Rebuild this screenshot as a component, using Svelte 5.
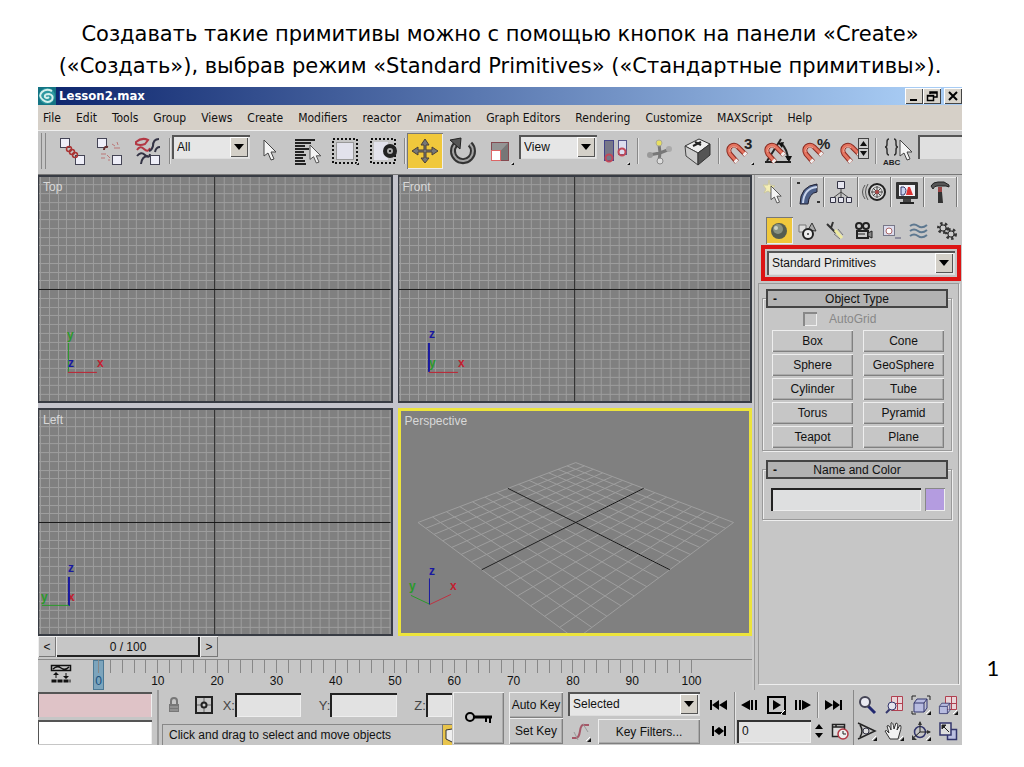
<script lang="ts">
	const menus = ['File', 'Edit', 'Tools', 'Group', 'Views', 'Create', 'Modifiers', 'reactor', 'Animation', 'Graph Editors', 'Rendering', 'Customize', 'MAXScript', 'Help'];
	const primitives = ['Box', 'Cone', 'Sphere', 'GeoSphere', 'Cylinder', 'Tube', 'Torus', 'Pyramid', 'Teapot', 'Plane'];

	const corner = '<path d="M29 26v3h-3z" fill="#111"/><path d="M26 28.5L28.500 26" stroke="#fff" fill="none"/>';
	const cursor = '<path d="M0 0v16l4-3 3 7 3-1-3-7h5z" fill="#f4f4f4" stroke="#444"/>';
	const magnet = '<path d="M12 26L5 18C1 12 8 6 13 11l8 8" fill="none" stroke="#8a2a20" stroke-width="5"/><path d="M12 26L5 18C1 12 8 6 13 11l8 8" fill="none" stroke="#e47460" stroke-width="3"/><path d="M5 16C4 12 8 9 12 12" fill="none" stroke="#f4b4a4"/><path d="M10 24l2 2M19 17l2 2" stroke="#eee" stroke-width="4"/>';
	const box = (x: number, y: number) => `<rect x="${x}.5" y="${y}.5" width="9" height="9" fill="#eeeef8" stroke="#445"/>`;
	const dots = '<rect x="3" y="3" width="24" height="24" fill="none" stroke="#111" stroke-width="2" stroke-dasharray="2 2"/>';

	// toolbar glyphs, drawn in a 30x30 box
	const tools: Record<string, string> = {
		link: box(3, 2) + box(18, 19) + '<g fill="none" stroke="#a33" stroke-width="1.500"><circle cx="12" cy="13" r="2.500"/><circle cx="15" cy="16" r="2.500"/><circle cx="18" cy="19" r="2.500"/></g>',
		unlink: box(2, 2) + box(17, 19) + '<path d="M13 11q-4-1-4 3" fill="none" stroke="#633" stroke-width="2"/><path d="M17 8l3 2m2-4l1 3m-4 3h6M6 18h5m-5 4h4m2-3l3 3m-2 2h2" stroke="#b77" fill="none"/>',
		bind: '<path d="M3 6q6-5 12-2l-3 4q-5 2-9 0zM4 14q3-5 7-1t6-1" fill="none" stroke="#b33844" stroke-width="2"/><path d="M26 3q-6 0-6 7-1 4-4 5M27 11q-4 0-5 5M4 20q4-5 8-1t5-1M15 20q-6 0-7 8" fill="none" stroke="#334" stroke-width="2"/>' + box(17, 19),
		select: `<g transform="translate(10 4)">${cursor}</g>`,
		list: '<path d="M3 4h20M3 7h16M3 10h10M3 13h14M3 16h9M3 19h11M3 22h8M3 25h10M3 28h11" stroke="#222" stroke-width="2"/><g transform="translate(18 9) scale(.9)">' + cursor + '</g>',
		region: dots + '<rect x="6.500" y="6.500" width="17" height="17" fill="#e2e2ec" stroke="#999"/>' + corner,
		window: dots + '<path d="M6 6h14v18H6z" fill="#e2e2ec"/><circle cx="22" cy="15" r="7" fill="#222"/><circle cx="22" cy="15" r="3" fill="#aaa"/><circle cx="22" cy="15" r="1" fill="#000"/>',
		move: '<path d="M15 3l4 6h-3v5h6v-3l6 4-6 4v-3h-6v6h3l-4 5-4-5h3v-6H8v3l-6-4 6-4v3h6V9h-3z" fill="#777" stroke="#4a4038"/>',
		rotate: '<path d="M9 8A10 10 0 1 0 23 8" fill="none" stroke="#333" stroke-width="6"/><path d="M8 9A10 10 0 1 0 23 8" fill="none" stroke="#a4a4a4" stroke-width="2"/><path d="M3 4l11-2-1 11z" fill="#555" stroke="#222"/>',
		scale: '<rect x="6.500" y="6.500" width="17" height="18" fill="#777" stroke="#844a50"/><path d="M7 24V7h16z" fill="#949494"/><rect x="6.500" y="14.500" width="9" height="10" fill="#fff" stroke="#d66"/>' + corner,
		pivot: '<rect x="3.500" y="4.500" width="9" height="20" fill="#778" stroke="#448"/><rect x="17.500" y="4.500" width="8" height="14" fill="#dde" stroke="#558"/><g fill="none" stroke="#c24858" stroke-width="2"><circle cx="8" cy="22" r="3.500"/><circle cx="21" cy="16" r="3.500"/></g>' + corner,
		manipulate: '<path d="M15 8l1 9M5 19l11-2 10-4M16 17l-1 8" stroke="#777" stroke-width="3" fill="none"/><circle cx="15" cy="7" r="3" fill="#e8df60" stroke="#aa9"/><circle cx="16" cy="25" r="3" fill="#ddd" stroke="#888"/><circle cx="6" cy="19" r="3" fill="#999"/><circle cx="25" cy="13" r="3" fill="#aaa"/>',
		keyboard: '<path d="M3 10l14-7 11 5-12 9z" fill="#eee" stroke="#333"/><path d="M3 10l13 7v12L4 20z" fill="#ccc" stroke="#444"/><path d="M28 8v11l-12 10V17z" fill="#555" stroke="#333"/><path d="M11 10l8-4M13 6l6 3" stroke="#222" stroke-width="2"/>',
		snap: magnet + '<text x="19" y="13" font-size="15">3</text>' + corner,
		angle: '<path d="M2 26h26M4 25L18 3M18 7q7 7 7 17" fill="none" stroke="#222" stroke-width="2"/><path d="M15 7l6-1-2 6zM22 20h7l-3 6z" fill="#111"/>' + magnet,
		percent: magnet + '<text x="16" y="13" font-size="15">%</text>',
		spinner: magnet + '<rect x="19.500" y="2.500" width="10" height="20" fill="#ccc" stroke="#444"/><path d="M20 12.500h9" stroke="#333"/><path d="M21 10l3.500-5 3.500 5zM21 15l3.500 5 3.500-5z" fill="#111"/>',
		named: '<path d="M7 3Q5 3 5 6v2q0 3-2 3 2 0 2 3v2q0 3 2 3M12 3q2 0 2 3v2q0 3 2 3-2 0-2 3v2q0 3-2 3" fill="none" stroke="#333" stroke-width="1.500"/><text x="1" y="29" font-size="8">ABC</text><g transform="translate(18 4)">' + cursor + '</g>'
	};

	// command panel tabs, 26x26
	const tabs: Record<string, string> = {
		Create: '<path d="M7 1l1 5 5 1-4 3 1 5-4-3-4 2 2-4-3-4 5 0z" fill="#f4eeb4" stroke="#ccc8a0"/><g transform="translate(9 7) scale(.85)">' + cursor + '</g>',
		Modify: '<path d="M5 25Q5 7 22 5v8q-8 1-9 12z" fill="#4c5f88" stroke="#223"/><path d="M8 24Q9 9 22 8" fill="none" stroke="#c8d4ec" stroke-width="2"/><path d="M2 4h3M22 23h3" stroke="#333" stroke-width="2"/>',
		Hierarchy: '<path d="M13 9v6M5 19l8-6 8 6M13 15v4" stroke="#444" fill="none"/><path d="M9.500 2.500h7v7h-7zM2.500 18.500h5v5h-5zM10.500 18.500h5v5h-5zM18.500 18.500h5v5h-5z" fill="#e6e6f0" stroke="#334"/>',
		Motion: '<path d="M4 6q-5 7 0 14M7 5q-5 8 0 16" stroke="#555" fill="none"/><circle cx="16" cy="13" r="8" fill="#ddd" stroke="#222" stroke-width="2"/><circle cx="16" cy="13" r="5" fill="none" stroke="#777"/><path d="M16 7v12M10 13h12M12 9l8 8M20 9l-8 8" stroke="#444"/><circle cx="16" cy="13" r="2" fill="#a44"/>',
		Display: '<rect x="2" y="3" width="22" height="17" rx="1" fill="#333"/><rect x="5" y="6" width="16" height="11" fill="#f2f2f8"/><path d="M7 8h3q4 3 0 8H7z" fill="#c8d4f0" stroke="#336"/><path d="M12 16l2-8h2l3 8z" fill="#d33"/><path d="M9 20h8v3H9z" fill="#444"/><path d="M6 24h14" stroke="#222" stroke-width="2"/>',
		Utilities: '<path d="M4 7q2-4 7-4h6l5 3v2l-3-1h-9q-3 0-4 3z" fill="#555" stroke="#222"/><path d="M11 8h4v6h-4z" fill="#944"/><path d="M11 13h4l1 11h-5z" fill="#333"/>'
	};

	// create categories, 20x20
	const kinds: Record<string, string> = {
		Geometry: '<circle cx="10" cy="10" r="8" fill="#555d50"/><circle cx="9" cy="8" r="5" fill="#899282"/><circle cx="7" cy="7" r="2" fill="#ccd2c4"/>',
		Shapes: '<path d="M11 9l4-7 4 8z" fill="#aaa" stroke="#333"/><path d="M2 4h7v7H2z" fill="#ddd" stroke="#777"/><circle cx="11" cy="13" r="5" fill="#eee" stroke="#222" stroke-width="2"/><circle cx="11" cy="13" r="1" fill="#333"/>',
		Lights: '<path d="M2 3l5 5M8 1l-2 6M7 8l4 4" stroke="#333" stroke-width="2"/><path d="M10 9l7 8" stroke="#eeeaa0" stroke-width="3"/><path d="M9 13l6 5M13 8l5 6" stroke="#777"/>',
		Cameras: '<g fill="#ccc" stroke="#222" stroke-width="2"><circle cx="6" cy="5" r="3"/><circle cx="13" cy="5" r="3"/><path d="M4 10h11v7H4z"/></g><path d="M15 12l4-2v7l-4-2zM5 13h7" stroke="#222" fill="#888"/>',
		Helpers: '<rect x="2.500" y="4.500" width="11" height="10" fill="#dcdcec" stroke="#778"/><circle cx="8" cy="10" r="3" fill="#fff" stroke="#a66"/><path d="M14 17h6" stroke="#557"/>',
		'Space Warps': '<path d="M1 5q4-3 8 0t9-1M1 10q4-3 8 0t9-1M1 15q4-3 8 0t9-1" fill="none" stroke="#5d7890" stroke-width="2"/>',
		Systems: '<g fill="#999" stroke="#333" stroke-width="4" stroke-dasharray="2 2"><circle cx="6" cy="7" r="4"/><circle cx="14" cy="13" r="4"/></g><g fill="#ccc" stroke="#333"><circle cx="6" cy="7" r="3"/><circle cx="14" cy="13" r="3"/></g>'
	};

	// playback and view navigation, 20x20
	const play: Record<string, string> = {
		start: '<path d="M1 5h2v10H1zM3 10l7-5v10zM10 10l8-5v10z"/>',
		prev: '<path d="M1 10l9-5v10zM11 5h2v10h-2zM15 5h2v10h-2z"/>',
		next: '<path d="M19 10l-9-5v10zM7 5h2v10H7zM3 5h2v10H3z"/>',
		end: '<path d="M19 5h-2v10h2zM17 10l-7-5v10zM10 10L2 5v10z"/>',
		key: '<path d="M3 5h2v10H3zM5 10l5-4v8zM15 5h2v10h-2zM15 10l-5-4v8z"/>',
		play: '<path d="M2 2h17v16H2z" fill="none" stroke="#000" stroke-width="2"/><path d="M7 5v10l8-5z"/>'
	};
	const tip = '<path d="M20 16v4h-4z" fill="#111"/><path d="M15 19l4-4" stroke="#fff"/>';
	const cube = '<path d="M3 8h10v9H3zM3 8l3-4h10l-3 4M16 4v9l-3 4" fill="#b8bce0" stroke="#33366c"/>';
	const nav = [
		['Zoom', '<path d="M11 11l7 7" stroke="#222870" stroke-width="3"/><circle cx="8" cy="7" r="5" fill="#eaeaf2" stroke="#445" stroke-width="2"/>'],
		['Zoom All', '<path d="M7.500 1.500h11v14h-11zM13.500 1v14M7 8.500h12" fill="#e8d4d8" stroke="#b04050"/><path d="M6 14l-4 4" stroke="#33366c" stroke-width="2"/><circle cx="8" cy="11" r="4" fill="#e4e4ee" stroke="#33366c"/>'],
		['Zoom Extents', cube + '<path d="M1 5V1h4M16 1h3v4M1 16v3h4" fill="none" stroke="#222"/>' + tip],
		['Zoom Extents All', '<path d="M7.500 1.500h11v13h-11zM13.500 1v13M7 8.500h12" fill="#e8d4d8" stroke="#b04050"/><g transform="translate(-1 5) scale(.8)">' + cube + '</g>' + tip],
		['Field of View', '<path d="M1 2l17 8-17 8M3 4q4 6 0 12" fill="none" stroke="#222" stroke-width="1.500"/><circle cx="9" cy="10" r="3" fill="#ddd" stroke="#334"/>' + tip],
		['Pan', '<path d="M6 18l-5-8q1-2 4 2L3 5q2-2 4 4L7 2q2-2 3 6l2-6q3 0 1 7l3-5q2 1 0 7l-2 7z" fill="#f2f2f2" stroke="#333"/>' + tip],
		['Arc Rotate', '<circle cx="9" cy="11" r="5.500" fill="none" stroke="#33366c" stroke-width="1.500"/><path d="M9 1v10M9 11h10M9 11l-8 7" stroke="#222"/><path d="M7 4l2-4 2 4zM16 9l4 2-4 2zM1 14v5h5z" fill="#333"/>' + tip],
		['Maximize Viewport', '<path d="M9.500 8.500h9v10h-9z" fill="#bbbfe0" stroke="#33366c" stroke-width="1.500"/><path d="M2 2h11v12H2z" fill="#ddd" stroke="#33366c" stroke-width="1.500"/><path d="M4 4h4L4 8zM5 5l6 6" fill="#222" stroke="#222"/>']
	];

	const views = [
		{ name: 'Top', axes: 'top' },
		{ name: 'Front', axes: 'front' },
		{ name: 'Left', axes: 'left' },
		{ name: 'Perspective', axes: 'persp' }
	];

	const step = 8.75;
	const cols = Array.from({ length: 41 }, (_, i) => Math.round(176 + (i - 20) * step) + 0.5);
	const rows = Array.from({ length: 27 }, (_, i) => Math.round(113 + (i - 13) * step) + 0.5);

	function project(u: number, v: number) {
		const s = (u + v) / 2;
		const t = (u - v) / 2;
		const w = 1 + 0.322 * s;
		return `${(175 + (158 * t) / w).toFixed(1)} ${(112 - (79.3 * s) / w).toFixed(1)}`;
	}
	const floor = Array.from({ length: 15 }, (_, i) => {
		const k = (i - 7) / 7;
		return `M${project(k, -1)}L${project(k, 1)}M${project(-1, k)}L${project(1, k)}`;
	}).join('');
	const floorAxes = `M${project(0, -1)}L${project(0, 1)}M${project(-1, 0)}L${project(1, 0)}`;

	const frames = Array.from({ length: 51 }, (_, i) => i * 2);
</script>

{#snippet tool(name: string)}
	<button type="button" class="tool" class:on={name === 'move'} aria-label={name}>
		<svg viewBox="0 0 30 30" width="30" height="30">{@html tools[name]}</svg>
	</button>
{/snippet}

{#snippet small(name: string, art: string)}
	<button type="button" class="small" aria-label={name}>
		<svg viewBox="0 0 20 20" width="20" height="20">{@html art}</svg>
	</button>
{/snippet}

{#snippet combo(text: string, label: string)}
	<span class="combo">
		<select aria-label={label}><option>{text}</option></select>
		<span class="drop"><svg viewBox="0 0 10 6" width="10" height="6"><path d="M0 0h10L5 6z" /></svg></span>
	</span>
{/snippet}

<main>
	<h1>Создавать такие примитивы можно с помощью кнопок на панели «Create»<br />(«Создать»), выбрав режим «Standard Primitives» («Стандартные примитивы»).</h1>

	<div class="app">
		<header class="titlebar">
			<svg viewBox="0 0 18 18" width="18" height="18">
				<rect width="18" height="18" fill="#147484" />
				<circle cx="9" cy="9" r="8" fill="#2c98a0" />
				<path d="M14 4Q8 1 4 5t1 8q5 4 9 0 2-5-3-6-5 0-4 3 2 2 4 0" fill="none" stroke="#d4f0ec" stroke-width="2" />
			</svg>
			<strong>Lesson2.max</strong>
			<button type="button" aria-label="Minimize"><svg viewBox="0 0 12 12" width="12" height="12"><path d="M2 10h7" stroke="#000" stroke-width="2" /></svg></button>
			<button type="button" aria-label="Restore"><svg viewBox="0 0 12 12" width="12" height="12"><path d="M4 4V2h7v5H8M4 3h7M1.500 5.500h6v5h-6zM1 6h7" fill="none" stroke="#000" stroke-width="1.500" /></svg></button>
			<button type="button" class="close" aria-label="Close"><svg viewBox="0 0 12 12" width="12" height="12"><path d="M2 2l8 8M10 2l-8 8" stroke="#000" stroke-width="2" /></svg></button>
		</header>

		<nav class="menubar">
			{#each menus as item}
				<button type="button">{item}</button>
			{/each}
		</nav>

		<div class="toolbar">
			<i class="grip"></i>
			{@render tool('link')}
			{@render tool('unlink')}
			{@render tool('bind')}
			<i class="sep"></i>
			{@render combo('All', 'Selection filter')}
			{@render tool('select')}
			{@render tool('list')}
			{@render tool('region')}
			{@render tool('window')}
			<i class="sep"></i>
			{@render tool('move')}
			{@render tool('rotate')}
			{@render tool('scale')}
			{@render combo('View', 'Coordinate system')}
			{@render tool('pivot')}
			<i class="sep"></i>
			{@render tool('manipulate')}
			{@render tool('keyboard')}
			<i class="sep"></i>
			{@render tool('snap')}
			{@render tool('angle')}
			{@render tool('percent')}
			{@render tool('spinner')}
			<i class="sep"></i>
			{@render tool('named')}
			<input class="sets" aria-label="Named selection sets" />
		</div>

		<div class="work">
			<div class="stage">
				<div class="views">
					{#each views as view}
						<section class="view" class:active={view.axes === 'persp'}>
							<svg viewBox={view.axes === 'persp' ? '0 0 349 223' : '0 0 352 226'} preserveAspectRatio="xMidYMid slice">
								{#if view.axes === 'persp'}
									<path d={floor} class="floor" />
									<path d={floorAxes} class="axis" />
									<path d="M29 194L10 185" stroke="#2a9a2a" />
									<path d="M29 194L50 184" stroke="#c03040" />
									<path d="M28.500 194v-26" stroke="#1818a0" />
									<text x="8" y="180" class="g">y</text>
									<text x="49" y="180" class="r">x</text>
									<text x="28" y="165" class="b">z</text>
								{:else}
									{#each cols as x}<path d="M{x} 0v226" class="line" />{/each}
									{#each rows as y}<path d="M0 {y}h352" class="line" />{/each}
									<path d="M176 0v226M0 113.500h352" class="axis" />
									{#if view.axes === 'top'}
										<path d="M29.500 196v-29" stroke="#2a9a2a" />
										<path d="M29 196.500h29" stroke="#c02030" />
										<text x="28" y="163" class="g">y</text>
										<text x="29" y="191" class="b">z</text>
										<text x="58" y="191" class="r">x</text>
									{:else if view.axes === 'front'}
										<text x="30" y="191" class="g">y</text>
										<path d="M30 196v-29" stroke="#1818a0" stroke-width="2" />
										<path d="M30 196.500h29" stroke="#c02030" />
										<text x="30" y="162" class="b">z</text>
										<text x="59" y="191" class="r">x</text>
									{:else}
										<text x="29" y="192" class="r">x</text>
										<path d="M30 197v-29" stroke="#1818a0" stroke-width="2" />
										<path d="M30 196.500H3" stroke="#2a9a2a" />
										<text x="29" y="163" class="b">z</text>
										<text x="2" y="192" class="g">y</text>
									{/if}
								{/if}
							</svg>
							<span>{view.name}</span>
						</section>
					{/each}
				</div>

				<div class="slider">
					<button type="button" aria-label="Previous frame">&lt;</button>
					<button type="button" class="thumb">0 / 100</button>
					<button type="button" aria-label="Next frame">&gt;</button>
				</div>

				<div class="timeline">
					<svg class="curve" viewBox="0 0 22 20" width="22" height="20" fill="none" stroke="#111">
						<path d="M1.500 1.500h19v5h-19zM3 5q4-4 8-1t8-1" stroke-width="1.500" />
						<path d="M1.500 17h19" stroke-width="3" stroke-dasharray="5 1" />
						<path d="M6 14V9M16 9v5" />
						<path d="M3 11l3-3 3 3zM13 12l3 3 3-3z" fill="#111" stroke="none" />
					</svg>
					<div class="ruler">
						{#each frames as f}
							<div class="tick" class:now={f === 0}>
								<i></i>
								{#if f % 10 === 0}<span>{f}</span>{/if}
							</div>
						{/each}
					</div>
				</div>
			</div>

			<aside class="panel">
				<div class="tabs">
					{#each Object.entries(tabs) as [name, art]}
						<button type="button" aria-label={name}><svg viewBox="0 0 26 26" width="26" height="26">{@html art}</svg></button>
					{/each}
				</div>
				<div class="kinds">
					{#each Object.entries(kinds) as [name, art]}
						<button type="button" class:on={name === 'Geometry'} aria-label={name}><svg viewBox="0 0 20 20" width="20" height="20">{@html art}</svg></button>
					{/each}
				</div>
				<div class="highlight">{@render combo('Standard Primitives', 'Category')}</div>
				<div class="rollouts">
					<section>
						<button type="button" class="head"><span>-</span>Object Type</button>
						<label class="auto"><input type="checkbox" disabled />AutoGrid</label>
						<div class="prims">
							{#each primitives as p}<button type="button">{p}</button>{/each}
						</div>
					</section>
					<section>
						<button type="button" class="head"><span>-</span>Name and Color</button>
						<div class="name">
							<input aria-label="Object name" />
							<button type="button" aria-label="Object color"></button>
						</div>
					</section>
				</div>
			</aside>
		</div>

		<footer>
			<div class="script">
				<input class="pink" aria-label="Macro recorder" />
				<input aria-label="MAXScript listener" />
			</div>
			<div class="status">
				<div class="coords">
					<button type="button" aria-label="Selection lock" class="lock">
						<svg viewBox="0 0 20 20" width="20" height="20"><path d="M7 9V6q0-3 3-3t3 3v3" fill="none" stroke="#777" stroke-width="2" /><path d="M5 9h10v8H5z" fill="#777" /><path d="M6 12h8M6 15h8" stroke="#aaa" /></svg>
					</button>
					<button type="button" aria-label="Absolute mode" class="mode">
						<svg viewBox="0 0 18 18" width="18" height="18" fill="none" stroke="#222"><rect x="1" y="1" width="16" height="16" stroke-width="2" /><path d="M9 2v14M2 9h14" stroke="#666" /><circle cx="9" cy="9" r="2.500" fill="#ccc" stroke-width="2" /></svg>
					</button>
					<label for="cx">X:</label><input id="cx" />
					<label for="cy">Y:</label><input id="cy" />
					<label for="cz">Z:</label><input id="cz" class="cut" />
				</div>
				<div class="prompt">
					<p>Click and drag to select and move objects</p>
					<button type="button" aria-label="Degradation override"><svg viewBox="0 0 10 20" width="10" height="20"><path d="M10 4L4 5v9l6 3" fill="#eee" stroke="#333" /></svg></button>
				</div>
			</div>
			<button type="button" class="bevel bigkey" aria-label="Set keys">
				<svg viewBox="0 0 30 16" width="30" height="16" fill="none" stroke="#000"><circle cx="6" cy="7" r="4" stroke-width="2" /><path d="M10 7h18" stroke-width="3" /><path d="M26 7v6M22 7v5" stroke-width="2" /></svg>
			</button>
			<div class="keys">
				<button type="button" class="bevel">Auto Key</button>
				<button type="button" class="bevel">Set Key</button>
			</div>
			<div class="filters">
				{@render combo('Selected', 'Key set')}
				<div>
					<button type="button" class="small" aria-label="Tangents">
						<svg viewBox="0 0 20 20" width="20" height="20"><path d="M1 16h4q3 0 4-7t4-6h5" fill="none" stroke="#a55868" stroke-width="2" /><path d="M3 10l4 8M12 2l5 8" stroke="#999" />{@html tip}</svg>
					</button>
					<button type="button" class="bevel">Key Filters...</button>
				</div>
			</div>
			<div class="transport">
				<div>
					{@render small('Go to start', play.start)}
					<i class="sep"></i>
					{@render small('Previous frame', play.prev)}
					{@render small('Play', play.play + tip)}
					{@render small('Next frame', play.next)}
					<i class="sep"></i>
					{@render small('Go to end', play.end)}
				</div>
				<div>
					{@render small('Key mode', play.key)}
					<i class="sep"></i>
					<input value="0" aria-label="Current frame" />
					<svg class="spin" viewBox="0 0 12 20" width="12" height="20"><path d="M2 8l4-5 4 5zM2 12l4 5 4-5z" /></svg>
					{@render small('Time configuration', '<path d="M2.500 3.500h12v12h-12zM3 6h12M6 3v3" fill="#ddd" stroke="#222" stroke-width="1.500"/><circle cx="13" cy="13" r="5" fill="#eee" stroke="#b33844" stroke-width="1.500"/><path d="M13 10v3h3" fill="none" stroke="#222"/>')}
				</div>
			</div>
			<div class="navigate">
				{#each nav as [name, art]}{@render small(name, art)}{/each}
			</div>
		</footer>
	</div>
	<span class="page">1</span>
</main>

<style>
	:global(body) {
		margin: 0;
		background: #fff;
	}
	main {
		display: grid;
		grid-template-columns: minmax(0, 1fr) 62px;
		padding: 18px 0 22px 38px;
		font-family: 'Liberation Sans', Arial, sans-serif;
		font-size: 12px;
		color: #111;
	}
	h1 {
		margin: 0 0 5px;
		font: 400 21px/32px 'DejaVu Sans', Verdana, sans-serif;
		text-align: center;
		white-space: nowrap;
		color: #000;
	}
	button,
	input,
	select {
		box-sizing: border-box;
		margin: 0;
		padding: 0;
		border: 0;
		border-radius: 0;
		background: none;
		font: inherit;
		color: inherit;
		min-width: 0;
	}
	svg {
		display: block;
		flex: none;
	}
	.app {
		grid-column: 1;
		background: #c6c6c6;
	}
	.page {
		grid-column: 2;
		grid-row: 2;
		align-self: end;
		justify-self: center;
		margin-bottom: 62px;
		font: 22px/30px Lato, sans-serif;
		color: #000;
	}
	.titlebar {
		display: flex;
		align-items: center;
		height: 18px;
		background: linear-gradient(90deg, #0c246c, #a8ccf4 95%);
		color: #fff;
	}
	.titlebar strong {
		flex: 1;
		margin-left: 3px;
		font: 700 13px/18px 'DejaVu Sans Condensed', 'DejaVu Sans', sans-serif;
	}
	.titlebar button {
		display: grid;
		place-items: center;
		width: 18px;
		height: 16px;
		background: #d8d4cc;
		box-shadow: inset 1px 1px #fff, inset -1px -1px #444;
	}
	.titlebar .close {
		margin-left: 3px;
	}
	.menubar {
		display: flex;
		gap: 15px;
		height: 26px;
		padding-left: 5px;
		background: #d6d0c8;
		border-bottom: 1px solid #eee;
		box-sizing: border-box;
		font: 12px 'DejaVu Sans Condensed', 'DejaVu Sans', sans-serif;
	}
	.toolbar {
		display: flex;
		align-items: center;
		height: 44px;
		padding-bottom: 4px;
		box-sizing: border-box;
		border-bottom: 1px solid #777;
	}
	.tool {
		display: grid;
		place-items: center;
		flex: none;
		width: 38px;
		height: 36px;
	}
	.tool.on {
		width: 36px;
		background: #f0c83c;
		box-shadow: inset 1px 1px #777, inset -1px -1px #eee;
	}
	.tool :global(text) {
		font-weight: 700;
		fill: #222;
	}
	.grip {
		width: 3px;
		height: 36px;
		margin: 0 7px 0 3px;
		border: solid #888;
		border-width: 0 1px;
	}
	.sep {
		flex: none;
		width: 1px;
		height: 26px;
		margin: 0 2px;
		background: #888;
		box-shadow: 1px 0 #e4e4e4;
	}
	.combo {
		display: grid;
		grid-template-columns: minmax(0, 1fr) 18px;
		box-sizing: border-box;
		height: 24px;
		padding: 2px;
		background: #e6e6e6;
		box-shadow: inset 2px 2px #555, inset -1px -1px #ddd;
	}
	.combo select {
		grid-area: 1 / 1 / 2 / 3;
		appearance: none;
		padding-left: 3px;
	}
	.drop {
		grid-area: 1 / 2;
		display: grid;
		place-items: center;
		background: #d4d0c8;
		box-shadow: inset 1px 1px #fff, inset -1px -1px #555;
		pointer-events: none;
	}
	.toolbar .combo {
		width: 78px;
		align-self: flex-start;
		margin-top: 4px;
	}
	.sets {
		flex: 1;
		align-self: flex-start;
		height: 24px;
		margin: 4px 0 0 2px;
		background: #e0e0e0;
		box-shadow: inset 2px 2px #555;
	}
	.work {
		display: grid;
		grid-template-columns: minmax(0, 1fr) 210px;
	}
	.stage {
		display: flex;
		flex-direction: column;
	}
	.views {
		display: grid;
		grid-template-columns: 1fr 1fr;
		gap: 5px;
		background: #c4c4cc;
	}
	.view {
		display: grid;
		height: 228px;
		box-sizing: border-box;
		border: 2px solid #383c44;
		border-left-width: 1px;
		background: #808080;
	}
	.view.active {
		border: 3px solid #ece43c;
	}
	.view svg,
	.view span {
		grid-area: 1 / 1;
	}
	.view svg {
		width: 100%;
		height: 100%;
		min-height: 0;
	}
	.view span {
		margin: 2px 4px;
		color: #d8d8d8;
		line-height: 16px;
	}
	.view text {
		font-size: 12px;
		font-weight: 700;
	}
	.line {
		stroke: #9e9e9e;
	}
	.axis {
		stroke: #181818;
		fill: none;
	}
	.floor {
		stroke: #9e9e9e;
		fill: none;
	}
	.r {
		fill: #c02030;
	}
	.g {
		fill: #2a9a2a;
	}
	.b {
		fill: #1818a0;
	}
	.slider {
		display: flex;
		height: 21px;
		margin-bottom: 2px;
	}
	.slider button {
		width: 18px;
		box-shadow: inset 1px 1px #eee, inset -1px -1px #777;
	}
	.slider .thumb {
		width: 144px;
		box-shadow: inset 1px 1px #eee, inset -2px -2px #222;
	}
	.timeline {
		display: flex;
		height: 30px;
		border-top: 1px solid #888;
	}
	.curve {
		margin: 4px 20px 0 12px;
	}
	.ruler {
		flex: 1;
		display: flex;
		justify-content: space-between;
		padding: 0 60px 0 6px;
	}
	.tick {
		display: flex;
		flex-direction: column;
		align-items: center;
		width: 1px;
	}
	.tick i {
		flex: none;
		width: 1px;
		height: 13px;
		background: #888;
	}
	.tick span {
		font-size: 12px;
		line-height: 17px;
	}
	.tick.now {
		width: 11px;
		margin: 0 -5px;
		background: #7ca4bc;
		box-shadow: inset 0 0 0 1px #4c7894;
		color: #18507c;
	}
	.panel {
		display: flex;
		flex-direction: column;
		padding: 2px 0 0 6px;
		box-shadow: inset 2px 0 #ccc, inset 3px 0 #999;
	}
	.tabs {
		display: flex;
		padding-right: 5px;
		height: 30px;
	}
	.tabs button {
		flex: 1;
		display: grid;
		place-items: center;
		box-shadow: inset -1px 0 #777, inset 0 1px #e8e8e8, 1px 0 #eee;
	}
	.kinds {
		display: flex;
		gap: 1px;
		padding: 10px 2px 0 8px;
	}
	.kinds button {
		display: grid;
		place-items: center;
		width: 27px;
		height: 27px;
	}
	.kinds .on {
		background: #f0c83c;
		box-shadow: inset 1px 1px #777, inset -1px -1px #eee;
	}
	.highlight {
		display: grid;
		margin: 1px 1px 0 3px;
		padding: 2px;
		border: 4px solid #dc1414;
	}
	.rollouts {
		flex: 1;
		margin: 2px 3px 6px 0;
		padding: 5px 6px 0 3px;
		border: solid #999;
		border-width: 1px 1px 0 1px;
		box-shadow: 1px 1px #eee;
	}
	.rollouts section {
		margin: 9px 0 0;
		padding: 0 3px 2px;
		border: 1px solid #999;
		box-shadow: 1px 1px #eee, inset 1px 1px #eee;
	}
	.rollouts section + section {
		margin-top: 18px;
		padding-bottom: 8px;
	}
	.head {
		position: relative;
		display: block;
		width: 100%;
		height: 19px;
		margin-top: -10px;
		background: #b2b2b2;
		border: 2px solid #444;
		line-height: 14px;
	}
	.head span {
		position: absolute;
		left: 5px;
		font-weight: 700;
	}
	.auto {
		display: flex;
		align-items: center;
		gap: 12px;
		height: 22px;
		margin-left: 37px;
		color: #888;
	}
	.auto input {
		appearance: none;
		width: 14px;
		height: 14px;
		box-shadow: inset 2px 2px #888, inset -1px -1px #eee;
	}
	.prims {
		display: grid;
		grid-template-columns: 1fr 1fr;
		gap: 2px 10px;
		padding: 0 4px 0 6px;
	}
	.prims button,
	.bevel {
		height: 22px;
		box-shadow: inset 1px 1px #eee, inset -1px -1px #808080, inset -2px -2px #aaa;
	}
	.name {
		display: flex;
		gap: 4px;
		margin: 9px 3px 0 5px;
	}
	.name input {
		flex: 1;
		height: 23px;
		background: #dedfe0;
		box-shadow: inset 2px 2px #222, inset -1px -1px #eee;
	}
	.name button {
		width: 20px;
		background: #b49ce0;
		box-shadow: inset 1px 1px #888, inset -1px -1px #eee;
	}
	footer {
		display: flex;
		height: 55px;
	}
	.script {
		display: grid;
		gap: 3px;
		width: 114px;
		padding: 2px 0 1px;
		box-sizing: border-box;
	}
	.script input {
		width: 100%;
		background: #fff;
		box-shadow: inset 1px 2px #555, inset -1px 0 #eee;
	}
	.script .pink {
		background: #dfc3c7;
	}
	.status {
		flex: 1;
		min-width: 0;
		display: flex;
		flex-direction: column;
		margin-left: 5px;
		border-left: 2px solid #999;
	}
	.coords {
		display: flex;
		align-items: center;
		height: 30px;
		font-size: 13px;
	}
	.lock,
	.mode {
		padding: 0 6px 0 5px;
	}
	.coords label {
		width: 29px;
		text-align: right;
		color: #444;
	}
	.coords .mode + label {
		width: 16px;
	}
	.coords input {
		flex: 66 1 0;
		height: 24px;
		background: #e2e2e2;
		box-shadow: inset 2px 2px #222, inset -1px -1px #eee;
	}
	.coords .cut {
		flex-grow: 26;
	}
	.prompt {
		flex: 1;
		display: flex;
		margin: 4px 0 0 3px;
	}
	.prompt p {
		flex: 1;
		margin: 0;
		padding-left: 6px;
		border: solid #888;
		border-width: 1px 0 0 1px;
		line-height: 20px;
		white-space: nowrap;
	}
	.prompt button {
		background: #e8c44c;
		box-shadow: inset 1px 1px #777;
	}
	.bigkey {
		display: grid;
		place-items: center;
		width: 51px;
		height: 52px;
		margin: 2px 5px 0 1px;
	}
	.keys {
		display: flex;
		flex-direction: column;
		width: 54px;
		margin-top: 2px;
		white-space: nowrap;
	}
	.keys .bevel {
		height: 26px;
	}
	.filters {
		display: flex;
		flex-direction: column;
		gap: 3px;
		width: 132px;
		margin: 2px 0 0 5px;
	}
	.filters > div {
		display: flex;
		gap: 4px;
	}
	.filters .bevel {
		flex: 1;
		height: 25px;
	}
	.small {
		display: grid;
		place-items: center;
		width: 26px;
		height: 26px;
	}
	.transport {
		display: flex;
		flex-direction: column;
		width: 148px;
		margin-left: 6px;
		padding-top: 2px;
		border-right: 1px solid #888;
		box-sizing: border-box;
	}
	.transport > div {
		display: flex;
		align-items: center;
	}
	.transport input {
		width: 74px;
		height: 23px;
		padding-left: 5px;
		background: #e2e2e2;
		box-shadow: inset 2px 2px #333, inset -1px -1px #eee;
	}
	.spin {
		margin: 0 2px;
	}
	.navigate {
		display: grid;
		grid-template-columns: repeat(4, 1fr);
		align-content: start;
		width: 108px;
		padding-top: 2px;
	}
</style>
